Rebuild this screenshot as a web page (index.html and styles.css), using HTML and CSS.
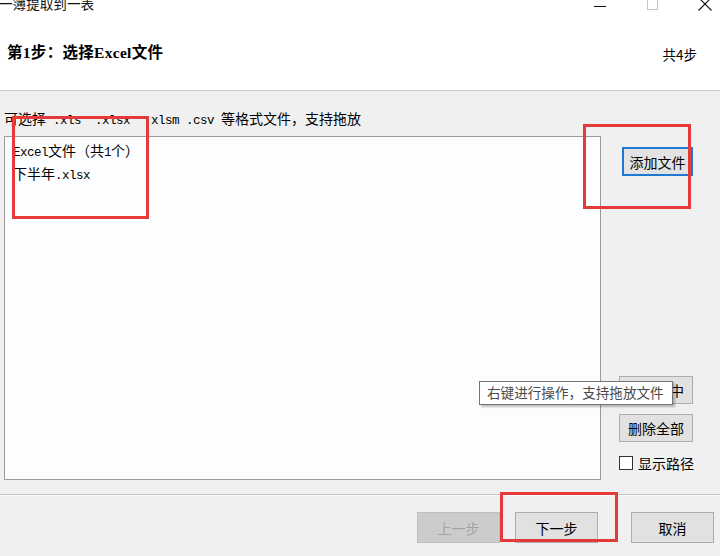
FILE: index.html
```html
<!DOCTYPE html>
<html lang="zh-CN">
<head>
<meta charset="utf-8">
<title>一簿提取到一表</title>
<link rel="stylesheet" href="styles.css">
</head>
<body>
<div class="window">
  <div class="titlebar">
    <span class="title">一簿提取到一表</span>
    <div class="controls">
      <svg class="ctl" width="14" height="14" viewBox="0 0 14 14"><line x1="0" y1="9.5" x2="12" y2="9.5" stroke="#111" stroke-width="1"/></svg>
      <svg class="ctl" width="14" height="14" viewBox="0 0 14 14"><rect x="1.5" y="2.5" width="10" height="10" fill="none" stroke="#c4c4c4" stroke-width="1"/></svg>
      <svg class="ctl" width="14" height="14" viewBox="0 0 14 14"><path d="M0.5 0.5 L13.5 13.5 M13.5 0.5 L0.5 13.5" stroke="#111" stroke-width="1.1" fill="none"/></svg>
    </div>
  </div>
  <div class="header">
    <h1 class="step">第1步：选择Excel文件</h1>
    <span class="total">共4步</span>
  </div>
  <div class="content">
    <p class="hint">可选择<span class="lat"> .xls  .xlsx  .xlsm .csv </span>等格式文件，支持拖放</p>
    <div class="main">
      <div class="list">
        <div class="item"><span class="lat">Excel</span>文件（共<span class="lat">1</span>个）</div>
        <div class="item">下半年<span class="lat">.xlsx</span></div>
      </div>
      <div class="side">
        <button class="btn focus">添加文件</button>
        <div class="side-bottom">
          <button class="btn">删除选中</button>
          <button class="btn">删除全部</button>
          <label class="check"><span class="box"></span>显示路径</label>
        </div>
      </div>
    </div>
  </div>
  <div class="footer">
    <button class="btn wide disabled">上一步</button>
    <button class="btn wide next">下一步</button>
    <button class="btn wide cancel">取消</button>
  </div>
  <div class="tooltip">右键进行操作，支持拖放文件</div>
  <div class="mark mark-list"></div>
  <div class="mark mark-add"></div>
  <div class="mark mark-next"></div>
</div>
</body>
</html>
```
FILE: styles.css
```css
* { box-sizing: border-box; }
html, body {
  margin: 0;
  padding: 0;
}
body {
  width: 720px;
  height: 556px;
  overflow: hidden;
  background: #f0f0f0;
  font-family: "Noto Sans CJK SC", sans-serif;
  color: #000;
}
.window {
  position: relative;
  width: 720px;
  height: 556px;
  display: flex;
  flex-direction: column;
  background: #f0f0f0;
}
.titlebar {
  height: 30px;
  flex-shrink: 0;
  background: #fff;
  display: flex;
  justify-content: space-between;
  align-items: flex-start;
  overflow: hidden;
}
.title {
  font-size: 13.6px;
  line-height: 14px;
  margin-top: -4px;
  margin-left: -1px;
  color: #111;
}
.controls {
  display: flex;
  gap: 38px;
  margin-top: -3px;
  margin-right: 8px;
}
.ctl { display: block; }
.header {
  height: 61px;
  flex-shrink: 0;
  background: #fff;
  border-bottom: 1px solid #c9c9c9;
  display: flex;
  justify-content: space-between;
  align-items: flex-start;
  padding: 13px 23px 0 7px;
}
.step {
  margin: 0;
  font-family: "Liberation Serif", "Noto Sans CJK SC", serif;
  font-size: 15.5px;
  font-weight: bold;
  line-height: 20px;
  letter-spacing: 0.3px;
}
.total {
  font-size: 13.5px;
  line-height: 20px;
  margin-top: 1px;
}
.content {
  flex-shrink: 0;
  padding: 17px 0 14px 4px;
}
.hint {
  margin: 0 0 8px;
  font-size: 14px;
  line-height: 20px;
  height: 20px;
  white-space: pre;
}
.lat {
  font-family: "Liberation Mono", monospace;
  font-size: 12.5px;
  letter-spacing: -0.5px;
  line-height: 1;
  white-space: pre;
}
.main {
  display: flex;
  gap: 18px;
  height: 344px;
}
.list {
  width: 597px;
  border: 1px solid #9a9a9a;
  background: #fcfdff;
  padding: 2px 0 0 8px;
}
.item {
  font-size: 14px;
  line-height: 23px;
  height: 23px;
}
.side {
  width: 74px;
  display: flex;
  flex-direction: column;
  justify-content: space-between;
  padding: 11px 0 9px;
}
.btn {
  font-family: "Noto Sans CJK SC", sans-serif;
  font-size: 14px;
  color: #000;
  background: #e1e1e1;
  border: 1px solid #adadad;
  padding: 0;
  margin: 0;
  height: 28px;
  width: 74px;
}
.btn.focus {
  height: 29px;
  width: 71px;
  margin-left: 3px;
  border: 2px solid #1f79d2;
  background: #e3e3e3;
}
.side-bottom {
  display: flex;
  flex-direction: column;
  gap: 10px;
}
.check {
  display: flex;
  align-items: center;
  gap: 5px;
  font-size: 14px;
  line-height: 16px;
  height: 16px;
  margin-top: 3px;
  white-space: nowrap;
}
.box {
  flex-shrink: 0;
  width: 14px;
  height: 14px;
  border: 1px solid #333;
  background: #fff;
}
.footer {
  flex: 1;
  border-top: 1px solid #c6c6c6;
  box-shadow: inset 0 1px 0 #fafafa;
  display: flex;
  justify-content: flex-end;
  align-items: flex-start;
  padding: 17px 6px 0 0;
  gap: 33px;
}
.btn.wide {
  width: 83px;
  height: 31px;
}
.btn.disabled {
  background: #cccccc;
  border-color: #bfbfbf;
  color: #a3a3a3;
  margin-right: -18px;
}
.tooltip {
  position: absolute;
  left: 479px;
  top: 381px;
  width: 194px;
  height: 24px;
  border: 1px solid #767676;
  background: #fff;
  box-shadow: 2px 2px 2px rgba(0, 0, 0, 0.25);
  font-size: 13.6px;
  line-height: 21px;
  padding-left: 7px;
  color: #4a4a4a;
  white-space: nowrap;
}
.mark {
  position: absolute;
  border: 3px solid #e43a3a;
}
.mark-list { left: 12px; top: 116px; width: 137px; height: 103px; }
.mark-add { left: 583px; top: 124px; width: 108px; height: 85px; }
.mark-next { left: 500px; top: 492px; width: 118px; height: 50px; }
```
